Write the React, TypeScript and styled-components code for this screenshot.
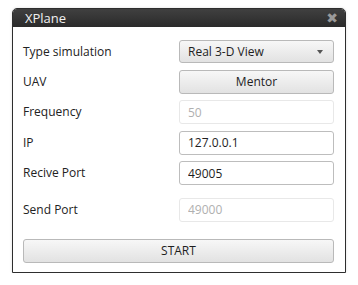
import React from "react";
import styled, { createGlobalStyle } from "styled-components";

const GlobalStyle = createGlobalStyle`
html, body {
  margin: 0;
  padding: 0;
  background: #ffffff;
}
body {
  font-family: "Open Sans", "DejaVu Sans", sans-serif;
}
`;

const Page = styled.div`
  padding: 8px 12px 0 12px;
  width: 334px;
`;

const Window = styled.div`
  width: 334px;
  height: 265px;
  box-sizing: border-box;
  border: 1px solid #2e2e2e;
  border-radius: 5px 5px 0 0;
  background: #ffffff;
  display: flex;
  flex-direction: column;
  box-shadow: 0 0 3px rgba(0, 0, 0, 0.12);
`;

const TitleBar = styled.div`
  height: 21px;
  background: linear-gradient(#404040, #2a2a2a);
  border-radius: 4px 4px 0 0;
  display: flex;
  align-items: center;
  justify-content: space-between;
  padding: 0 7px 0 12px;
  color: #f0f0f0;
  font-size: 13px;
`;

const Close = styled.span`
  color: #9a9a9a;
  font-size: 14px;
  font-weight: bold;
  line-height: 1;
`;

const Body = styled.div`
  padding: 13px 11px 10px 10px;
  display: grid;
  grid-template-columns: 156px 155px;
  row-gap: 6px;
  align-items: center;
`;

const Label = styled.div<{ $gap?: number }>`
  font-size: 12px;
  color: #222222;
  margin-top: ${(p) => p.$gap ?? 0}px;
`;

const Field = styled.div<{ $gap?: number }>`
  margin-top: ${(p) => p.$gap ?? 0}px;
`;

const Button = styled.button`
  width: 100%;
  height: 24px;
  box-sizing: border-box;
  border: 1px solid #b9b9b9;
  border-radius: 3px;
  background: linear-gradient(#f7f7f7, #e2e2e2);
  font-family: inherit;
  font-size: 12px;
  color: #1e1e1e;
  padding: 0 8px;
`;

const Select = styled(Button)`
  height: 23px;
  display: flex;
  align-items: center;
  justify-content: space-between;
  text-align: left;
`;

const Caret = styled.span`
  width: 0;
  height: 0;
  border-left: 3.5px solid transparent;
  border-right: 3.5px solid transparent;
  border-top: 4px solid #555;
  margin-right: 2px;
`;

const Input = styled.input`
  width: 100%;
  height: 24px;
  box-sizing: border-box;
  border: 1px solid #bdbdbd;
  border-radius: 3px;
  padding: 0 8px;
  font-family: inherit;
  font-size: 12px;
  color: #1e1e1e;
  background: #fff;
  outline: none;
  &:disabled {
    border-color: #e8e8e8;
    color: #b0b0b0;
    background: #fff;
  }
`;

const Start = styled(Button)`
  grid-column: 1 / span 2;
  margin-top: 11px;
`;

export default function App() {
  return (
    <>
      <GlobalStyle />
      <Page>
        <Window>
          <TitleBar>
            <span>XPlane</span>
            <Close>✖</Close>
          </TitleBar>
          <Body>
            <Label>Type simulation</Label>
            <Field>
              <Select>
                <span>Real 3-D View</span>
                <Caret />
              </Select>
            </Field>
            <Label>UAV</Label>
            <Field>
              <Button>Mentor</Button>
            </Field>
            <Label>Frequency</Label>
            <Field>
              <Input disabled defaultValue="50" />
            </Field>
            <Label>IP</Label>
            <Field>
              <Input defaultValue="127.0.0.1" />
            </Field>
            <Label>Recive Port</Label>
            <Field>
              <Input defaultValue="49005" />
            </Field>
            <Label $gap={6}>Send Port</Label>
            <Field $gap={6}>
              <Input disabled defaultValue="49000" />
            </Field>
            <Start>START</Start>
          </Body>
        </Window>
      </Page>
    </>
  );
}
